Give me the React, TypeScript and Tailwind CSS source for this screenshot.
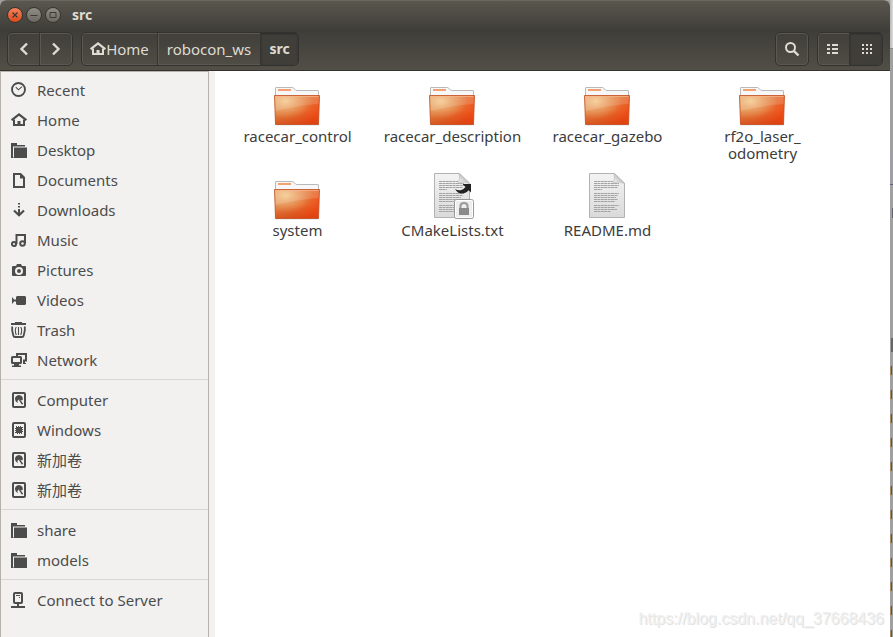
import type { ReactNode } from 'react';

type IconName =
  | 'recent'
  | 'home'
  | 'folder'
  | 'document'
  | 'download'
  | 'music'
  | 'camera'
  | 'video'
  | 'trash'
  | 'network'
  | 'disk'
  | 'chip'
  | 'server';

type Place = {
  label: string;
  icon: IconName;
};

type FileItem = {
  name: string;
  kind: 'folder' | 'text' | 'link';
};

const places: Place[][] = [
  [
    { label: 'Recent', icon: 'recent' },
    { label: 'Home', icon: 'home' },
    { label: 'Desktop', icon: 'folder' },
    { label: 'Documents', icon: 'document' },
    { label: 'Downloads', icon: 'download' },
    { label: 'Music', icon: 'music' },
    { label: 'Pictures', icon: 'camera' },
    { label: 'Videos', icon: 'video' },
    { label: 'Trash', icon: 'trash' },
    { label: 'Network', icon: 'network' },
  ],
  [
    { label: 'Computer', icon: 'disk' },
    { label: 'Windows', icon: 'chip' },
    { label: '新加卷', icon: 'disk' },
    { label: '新加卷', icon: 'disk' },
  ],
  [
    { label: 'share', icon: 'folder' },
    { label: 'models', icon: 'folder' },
  ],
  [{ label: 'Connect to Server', icon: 'server' }],
];

const files: FileItem[] = [
  { name: 'racecar_control', kind: 'folder' },
  { name: 'racecar_description', kind: 'folder' },
  { name: 'racecar_gazebo', kind: 'folder' },
  { name: 'rf2o_laser_\nodometry', kind: 'folder' },
  { name: 'system', kind: 'folder' },
  { name: 'CMakeLists.txt', kind: 'link' },
  { name: 'README.md', kind: 'text' },
];

const diskFrame = <rect x="2" y="1" width="12" height="14" rx="1" fill="none" stroke="currentColor" strokeWidth="2" />;

const icons: Record<IconName, ReactNode> = {
  recent: (
    <>
      <circle cx="7.5" cy="7.5" r="6.5" fill="none" stroke="currentColor" strokeWidth="1.9" />
      <path d="M4.8 5.2L7.4 7.8L11 4.6" fill="none" stroke="currentColor" strokeWidth="1.1" />
    </>
  ),
  home: (
    <>
      <path d="M.6 8.2L8 2.3l7.4 5.9" fill="none" stroke="currentColor" strokeWidth="2.2" />
      <path d="M3 7.5V13h10V7.5" fill="none" stroke="currentColor" strokeWidth="2" />
      <path d="M6.5 9h3v4h-3z" />
    </>
  ),
  folder: <path d="M0 1h6v2h8v1.500H2V16H0zM3 5.500h13V16H2v-.6h1z" />,
  document: (
    <>
      <path d="M3 2h6.5L13 5.5V15H3z" fill="none" stroke="currentColor" strokeWidth="2" />
      <path d="M9 2v4.500h4.500z" />
    </>
  ),
  download: (
    <>
      <path d="M7 1h2v1.500H7zM7 4h2v1.500H7zM7 7h2v5H7z" />
      <path d="M3 8.500l5 4.700 5-4.700" fill="none" stroke="currentColor" strokeWidth="2.2" />
    </>
  ),
  music: (
    <g fill="none" stroke="currentColor" strokeWidth="2">
      <circle cx="3" cy="12" r="2.1" />
      <circle cx="11.5" cy="11.5" r="2.3" />
      <path d="M5.500 12V3H14v8.500" />
    </g>
  ),
  camera: (
    <path
      fillRule="evenodd"
      d="M2 4h3l1-2h4l1 2h3a1 1 0 0 1 1 1v8a1 1 0 0 1-1 1H2a1 1 0 0 1-1-1V5a1 1 0 0 1 1-1zm6 1a4 4 0 1 0 0 8 4 4 0 0 0 0-8zm0 2a2 2 0 1 1 0 4 2 2 0 0 1 0-4z"
    />
  ),
  video: <path d="M1 5l3 3.500L1 12zM6 4h8l1 1v7l-1 1H6l-1-1V9.500H3.500v-2H5V5z" />,
  trash: (
    <>
      <path d="M4 0h7v1h4v2H0V1h4z" />
      <path d="M1.200 4.500v4l1.100 5q.3 1.500 1.700 1.500h7q1.400 0 1.700-1.500l1.100-5v-4" fill="none" stroke="currentColor" strokeWidth="1.8" />
      <path
        d="M5.300 5q-2 3 0 8M7.500 5v8M9.700 5q2 3 0 8"
        fill="none"
        stroke="currentColor"
        strokeWidth="1.1"
      />
    </>
  ),
  network: (
    <>
      <path d="M6 4V2h9v6.500h-3" fill="none" stroke="currentColor" strokeWidth="2" />
      <rect x="1" y="5" width="9" height="6" rx="0.5" fill="none" stroke="currentColor" strokeWidth="2" />
      <path d="M3 12h5v1.500h2V15H1v-1.500h2zM12 9h2v2h1v1h-3z" />
    </>
  ),
  disk: (
    <>
      {diskFrame}
      <path d="M8 3a4 4 0 0 0-3.700 5.600c.5 1.200 1.500 2 2.700 2.300L6.300 9 8 7.500l1.500 1L11.700 8A4 4 0 0 0 8 3z" />
      <path d="M8 8.200l1-.6 3.200 4.200-1.300 1z" />
    </>
  ),
  chip: (
    <>
      {diskFrame}
      <path d="M5 5h6v6H5z" />
      <path d="M5 4h1v1H5zM7 4h1v1H7zM9 4h1v1H9zM11 5h1v1h-1zM11 7h1v1h-1zM11 9h1v1h-1zM10 11h1v1h-1zM8 11h1v1H8zM6 11h1v1H6zM4 6h1v1H4zM4 8h1v1H4zM4 10h1v1H4z" />
    </>
  ),
  server: (
    <>
      <rect x="3" y="1" width="8" height="10" rx="1" fill="none" stroke="currentColor" strokeWidth="2" />
      <path d="M5 3h4v1H5zM8 5h1v1H8zM6 12h2v2H6zM0 14h14v2H0z" />
    </>
  ),
};

const Icon = ({ name }: { name: IconName }) => (
  <svg viewBox="0 0 16 16" className="size-4 shrink-0" fill="currentColor" aria-hidden="true">
    {icons[name]}
  </svg>
);

const FolderArt = () => (
  <svg viewBox="0 0 49 48" className="w-[49px] h-12" aria-hidden="true">
    <defs>
      <linearGradient id="folder" x1="0" y1="0" x2="1" y2="0.6">
        <stop offset="0" stopColor="#e29a58" />
        <stop offset="0.55" stopColor="#e27a3a" />
        <stop offset="1" stopColor="#f04c16" />
      </linearGradient>
      <radialGradient id="glow" cx="0.25" cy="0.2" r="0.6">
        <stop offset="0" stopColor="#f8d9a0" stopOpacity="0.8" />
        <stop offset="1" stopColor="#f0b080" stopOpacity="0" />
      </radialGradient>
      <linearGradient id="shade" x1="0" y1="0" x2="0" y2="1">
        <stop offset="0.5" stopColor="#d84010" stopOpacity="0" />
        <stop offset="1" stopColor="#d03a0c" stopOpacity="0.6" />
      </linearGradient>
    </defs>
    <path d="M3 46.500h43v1H3z" fill="#ddd" />
    <path d="M2.500 20V10q0-.5.5-.5h16.500q1 0 2 1.500t2.500 1.500H45q.5 0 .5.500V20z" fill="#f7f7f7" stroke="#b9b9b9" />
    <path d="M5 11h13v2H5z" fill="#f3a173" />
    <path d="M1.500 17.500h45L45.500 46.500h-43z" fill="url(#folder)" />
    <path d="M1.500 17.500h45L45.500 46.500h-43z" fill="url(#shade)" />
    <path d="M1.500 17.500h45L45.500 46.500h-43z" fill="url(#glow)" />
    <path d="M2 18h44l-.3 8Q28 27 2.300 33z" fill="#fff" fillOpacity="0.14" />
    <path d="M1.500 17.500h45L45.500 46.500h-43z" fill="none" stroke="#bf4d22" strokeOpacity="0.8" />
    <path d="M2.500 18.500h43" stroke="#f7b78c" strokeOpacity="0.7" />
  </svg>
);

const DocumentArt = ({ linked }: { linked?: boolean }) => (
  <svg viewBox="0 0 49 48" className="w-[49px] h-12" aria-hidden="true">
    <defs>
      <linearGradient id="paper" x1="0" y1="0" x2="0" y2="1">
        <stop offset="0" stopColor="#f3f3f3" />
        <stop offset="1" stopColor="#dadada" />
      </linearGradient>
      <linearGradient id="fold" x1="0" y1="1" x2="1" y2="0">
        <stop offset="0" stopColor="#fff" />
        <stop offset="0.5" stopColor="#c8c8c8" />
        <stop offset="1" stopColor="#eee" />
      </linearGradient>
    </defs>
    <path d="M6.500 1.500h25l10 9.500v34.500h-35z" fill="url(#paper)" stroke="#b2b2b2" />
    <path d="M31 1.500Q32.500 7 30.500 10.500 37 9 41.500 11.500z" fill="url(#fold)" stroke="#bbb" strokeWidth="0.7" />
    <path
      d="M11 9.500h19M11 11.500h25M11 13.500h25M11 15.500h24M11 17.500h8M11 21.500h25M11 23.500h24M11 25.500h22M11 27.500h24M11 29.500h21M11 33.500h25M11 35.500h21M11 37.500h23M11 39.500h17"
      stroke="#a3a3a3"
      strokeDasharray="3 0.4"
    />
    {linked && (
      <>
        <path d="M34.500 12H43v8.500l-2.300-2.300q-3 3.300-7 3.300-4 0-6.700-4.500 2.700 1.700 5.700 1.200 3-.6 4.800-3.200z" fill="#222" />
        <rect x="26.5" y="27.5" width="19" height="19" rx="2" fill="#eee" stroke="#999" />
        <rect x="27.5" y="28.5" width="17" height="17" rx="1" fill="none" stroke="#fff" />
        <path d="M32.500 36.500v-2.500q0-3 3.500-3t3.500 3v2.500" fill="none" stroke="#999" strokeWidth="2" />
        <path d="M31 36h10v7H31z" fill="#8a8a8a" />
      </>
    )}
  </svg>
);

const TitleBar = () => (
  <div className="flex h-[29px] items-center gap-[3px] border-t border-[#6a675e] bg-linear-to-b from-[#5a574e] to-[#403f3a] pl-[7px] text-[#3c3b37]">
    <button type="button" aria-label="Close" className="size-4 rounded-full border border-[#35342f] bg-linear-to-b from-[#f5825c] to-[#dc4916]">
      <svg viewBox="0 0 14 14" className="size-[14px]" fill="none" stroke="currentColor" strokeWidth="1.3">
        <path d="M4.500 4.500l5 5M9.500 4.500l-5 5" />
      </svg>
    </button>
    <button type="button" aria-label="Minimize" className="size-4 rounded-full border border-[#35342f] bg-linear-to-b from-[#8f8d85] to-[#6b6962]">
      <svg viewBox="0 0 14 14" className="size-[14px]" fill="none" stroke="currentColor">
        <path d="M3.500 7.500h7" />
      </svg>
    </button>
    <button type="button" aria-label="Maximize" className="size-4 rounded-full border border-[#35342f] bg-linear-to-b from-[#8f8d85] to-[#6b6962]">
      <svg viewBox="0 0 14 14" className="size-[14px]" fill="none" stroke="currentColor">
        <path d="M4 4.500h6v5H4z" />
      </svg>
    </button>
    <h1 className="pl-2 text-sm font-bold text-[#dfdbd2]">src</h1>
  </div>
);

const groupStyle = 'flex h-[34px] overflow-hidden rounded-[5px] border border-[#33322e] shadow-[inset_0_0_0_1px_#5a5850]';
const dividerStyle = 'border-r border-[#35342f] shadow-[1px_0_0_#5a5850]';
const activeStyle = 'bg-[#3f3e39] shadow-[inset_0_1px_2px_#2b2a27]';

const Toolbar = () => (
  <nav className="flex h-[42px] items-start border-b border-[#35332f] bg-linear-to-b from-[#3e3d38] to-[#524f47] px-[7px] pt-[3px] text-[#dfdbd2]">
    <div className={groupStyle}>
      <button type="button" aria-label="Back" className={`flex w-8 items-center justify-center ${dividerStyle}`}>
        <svg viewBox="0 0 16 16" className="size-4" fill="none" stroke="currentColor" strokeWidth="2.4">
          <path d="M11 2.500L5.500 8l5.500 5.500" />
        </svg>
      </button>
      <button type="button" aria-label="Forward" className="flex w-8 items-center justify-center">
        <svg viewBox="0 0 16 16" className="size-4" fill="none" stroke="currentColor" strokeWidth="2.4">
          <path d="M5 2.500L10.500 8 5 13.500" />
        </svg>
      </button>
    </div>
    <div className={`ml-2 text-[15px] ${groupStyle}`}>
      <button type="button" className={`flex w-[76px] items-center justify-center ${dividerStyle}`}>
        <Icon name="home" />
        Home
      </button>
      <button type="button" className={`w-[103px] ${dividerStyle}`}>
        robocon_ws
      </button>
      <button type="button" className={`w-[37px] text-sm font-bold ${activeStyle}`}>
        src
      </button>
    </div>
    <div className={`ml-auto ${groupStyle}`}>
      <button type="button" aria-label="Search" className="flex w-8 items-center justify-center">
        <svg viewBox="0 0 16 16" className="size-4" fill="none" stroke="currentColor">
          <circle cx="6.5" cy="6.5" r="4.5" strokeWidth="2" />
          <path d="M9.800 9.800l4.700 4.700" strokeWidth="2.4" />
        </svg>
      </button>
    </div>
    <div className={`ml-2 ${groupStyle}`}>
      <button type="button" aria-label="List view" className={`flex w-8 items-center justify-center ${dividerStyle}`}>
        <svg viewBox="0 0 16 16" className="size-4" fill="currentColor">
          <path d="M1 3h3v2H1zM6 3h6v2H6zM1 7h3v2H1zM6 7h6v2H6zM1 11h3v2H1zM6 11h6v2H6z" />
        </svg>
      </button>
      <button type="button" aria-label="Icon view" className={`flex w-8 items-center justify-center ${activeStyle}`}>
        <svg viewBox="0 0 16 16" className="size-4" fill="currentColor">
          <path d="M4 3h2v2H4zM8 3h2v2H8zM12 3h2v2h-2zM4 7h2v2H4zM8 7h2v2H8zM12 7h2v2h-2zM4 11h2v2H4zM8 11h2v2H8zM12 11h2v2h-2z" />
        </svg>
      </button>
    </div>
  </nav>
);

const Sidebar = () => (
  <aside className="w-[209px] shrink-0 border-x border-t border-[#b6b2ab] pt-[3px] text-[15px] leading-5 text-[#4c4c4c]">
    {places.map((group, i) => (
      <div key={i}>
        {i > 0 && <hr className="mt-1 mb-[5px] border-[#d9d7d4]" />}
        {group.map((place, j) => (
          <a key={j} href="#" className="flex h-[30px] items-center gap-[10px] pl-[10px]">
            <Icon name={place.icon} />
            {place.label}
          </a>
        ))}
      </div>
    ))}
  </aside>
);

const FileGrid = () => (
  <main className="flex-1 bg-white pt-[7px] pl-[5px]">
    <div className="grid grid-cols-[repeat(auto-fill,155px)] gap-y-[10px]">
      {files.map((file) => (
        <a key={file.name} href="#" className="flex flex-col items-center gap-[2px] text-[#3c3c3c]">
          {file.kind === 'folder' ? <FolderArt /> : <DocumentArt linked={file.kind === 'link'} />}
          <span className="whitespace-pre-line text-center text-[15px] leading-[17px]">{file.name}</span>
        </a>
      ))}
    </div>
  </main>
);

// sliver of the window that sits behind the file manager
const Backdrop = () => (
  <div className="flex w-[3px] shrink-0 flex-col bg-[#a0a0a0]" aria-hidden="true">
    <div className="h-12 bg-linear-to-r from-[#b8b8b8] to-[#dedede]" />
    <div className="mb-[101px] h-px bg-[#888]" />
    <div className="h-[34px] bg-[#a09fa6]" />
    <div className="mb-[23px] h-px bg-[#60607a]" />
    <div className="mb-[120px] h-[10px] w-px self-end bg-[#66636e]" />
    <div className="mb-[14px] h-[14px] w-[2px] self-end bg-[#666]" />
    <div className="flex flex-col gap-[15px]">
      {Array.from({ length: 12 }, (_, i) => (
        <div key={i} className="h-[9px] w-[2px] border-l border-[#a88a64] bg-[#4f5866]" />
      ))}
    </div>
  </div>
);

export default function App() {
  return (
    <div className="flex min-h-screen bg-[#a0a0a0] font-['Noto_Sans','Noto_Sans_CJK_SC',sans-serif]">
      <div className="relative flex min-w-0 flex-1 flex-col overflow-hidden rounded-t-[6px] bg-[#f2f1f0]">
        <TitleBar />
        <Toolbar />
        <div className="flex flex-1 gap-[6px]">
          <Sidebar />
          <FileGrid />
        </div>
        <p className="absolute right-[6px] bottom-2 font-['Liberation_Sans',sans-serif] text-base text-[#f0f0f0] [text-shadow:1px_1px_0_#e2e2e2]">
          https://blog.csdn.net/qq_37668436
        </p>
      </div>
      <Backdrop />
    </div>
  );
}
